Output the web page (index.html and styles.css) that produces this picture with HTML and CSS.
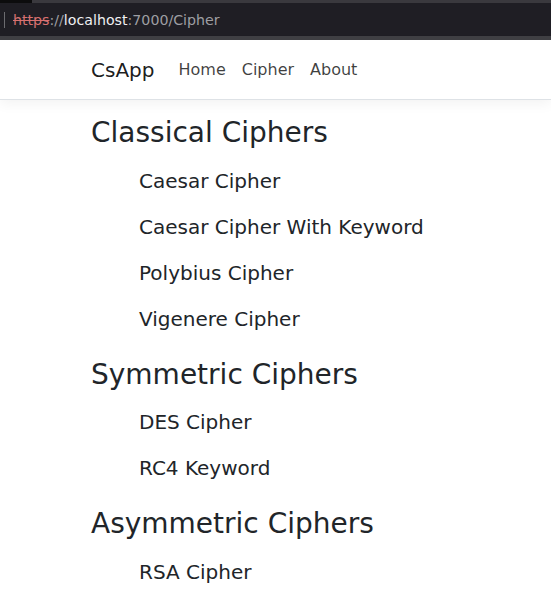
FILE: index.html
```html
<!DOCTYPE html>
<html lang="en">
<head>
<meta charset="utf-8">
<title>Cipher - CsApp</title>
<link rel="stylesheet" href="styles.css">
</head>
<body>
<div class="chrome">
  <div class="chrome-top"><span class="tab-dark"></span></div>
  <div class="urlbar">
    <span class="caret"></span>
    <span class="url"><span class="proto">https</span><span class="dim">://</span><span class="host">localhost</span><span class="dim">:7000/Cipher</span></span>
  </div>
  <div class="chrome-bottom"></div>
</div>
<header class="navbar">
  <div class="nav-inner">
    <a class="brand">CsApp</a>
    <nav class="links">
      <a class="nav-link">Home</a>
      <a class="nav-link">Cipher</a>
      <a class="nav-link">About</a>
    </nav>
  </div>
</header>
<main class="content">
  <section class="group">
    <h3 class="group-title">Classical Ciphers</h3>
    <ul class="cipher-list">
      <li>Caesar Cipher</li>
      <li>Caesar Cipher With Keyword</li>
      <li>Polybius Cipher</li>
      <li>Vigenere Cipher</li>
    </ul>
  </section>
  <section class="group">
    <h3 class="group-title">Symmetric Ciphers</h3>
    <ul class="cipher-list">
      <li>DES Cipher</li>
      <li>RC4 Keyword</li>
    </ul>
  </section>
  <section class="group">
    <h3 class="group-title">Asymmetric Ciphers</h3>
    <ul class="cipher-list">
      <li>RSA Cipher</li>
    </ul>
  </section>
</main>
</body>
</html>
```
FILE: styles.css
```css
html, body {
  margin: 0;
  padding: 0;
  background: #fff;
  font-family: "DejaVu Sans", sans-serif;
  color: #212529;
  overflow: hidden;
}
.chrome {
  background: #1f1e24;
  display: flex;
  flex-direction: column;
}
.chrome-top {
  height: 3px;
  background: #3a393e;
  display: flex;
}
.tab-dark {
  width: 32px;
  background: #0c0c0d;
}
.urlbar {
  height: 33px;
  display: flex;
  align-items: center;
  gap: 8px;
  padding-left: 4px;
}
.caret {
  width: 1px;
  height: 16px;
  background: #6c6c70;
}
.url {
  font-size: 14.2px;
  color: #9e9ea3;
}
.proto {
  color: #d77070;
  text-decoration: line-through;
}
.host {
  color: #f0f0f2;
}
.dim {
  color: #9e9ea3;
}
.chrome-bottom {
  height: 4px;
  background: #3f3f43;
}
.navbar {
  background: #fff;
  border-bottom: 1px solid #dee2e6;
  box-shadow: 0 4px 12px rgba(0,0,0,0.05);
  height: 59px;
  display: flex;
  align-items: center;
}
.nav-inner {
  padding-left: 91px;
  display: flex;
  align-items: center;
}
.brand {
  font-size: 20px;
  color: rgba(0,0,0,0.9);
  margin-right: 16px;
}
.links {
  display: flex;
}
.nav-link {
  font-size: 16px;
  padding: 8px;
  color: rgba(0,0,0,0.75);
}
.content {
  padding: 16px 0 0 91px;
}
.group-title {
  font-size: 28px;
  font-weight: 400;
  line-height: 1.2;
  margin: 0;
}
.cipher-list {
  list-style: none;
  margin: 16px 0 24px;
  padding-left: 48px;
  display: flex;
  flex-direction: column;
  gap: 16px;
}
.cipher-list li {
  font-size: 20px;
  line-height: 30px;
}
```
